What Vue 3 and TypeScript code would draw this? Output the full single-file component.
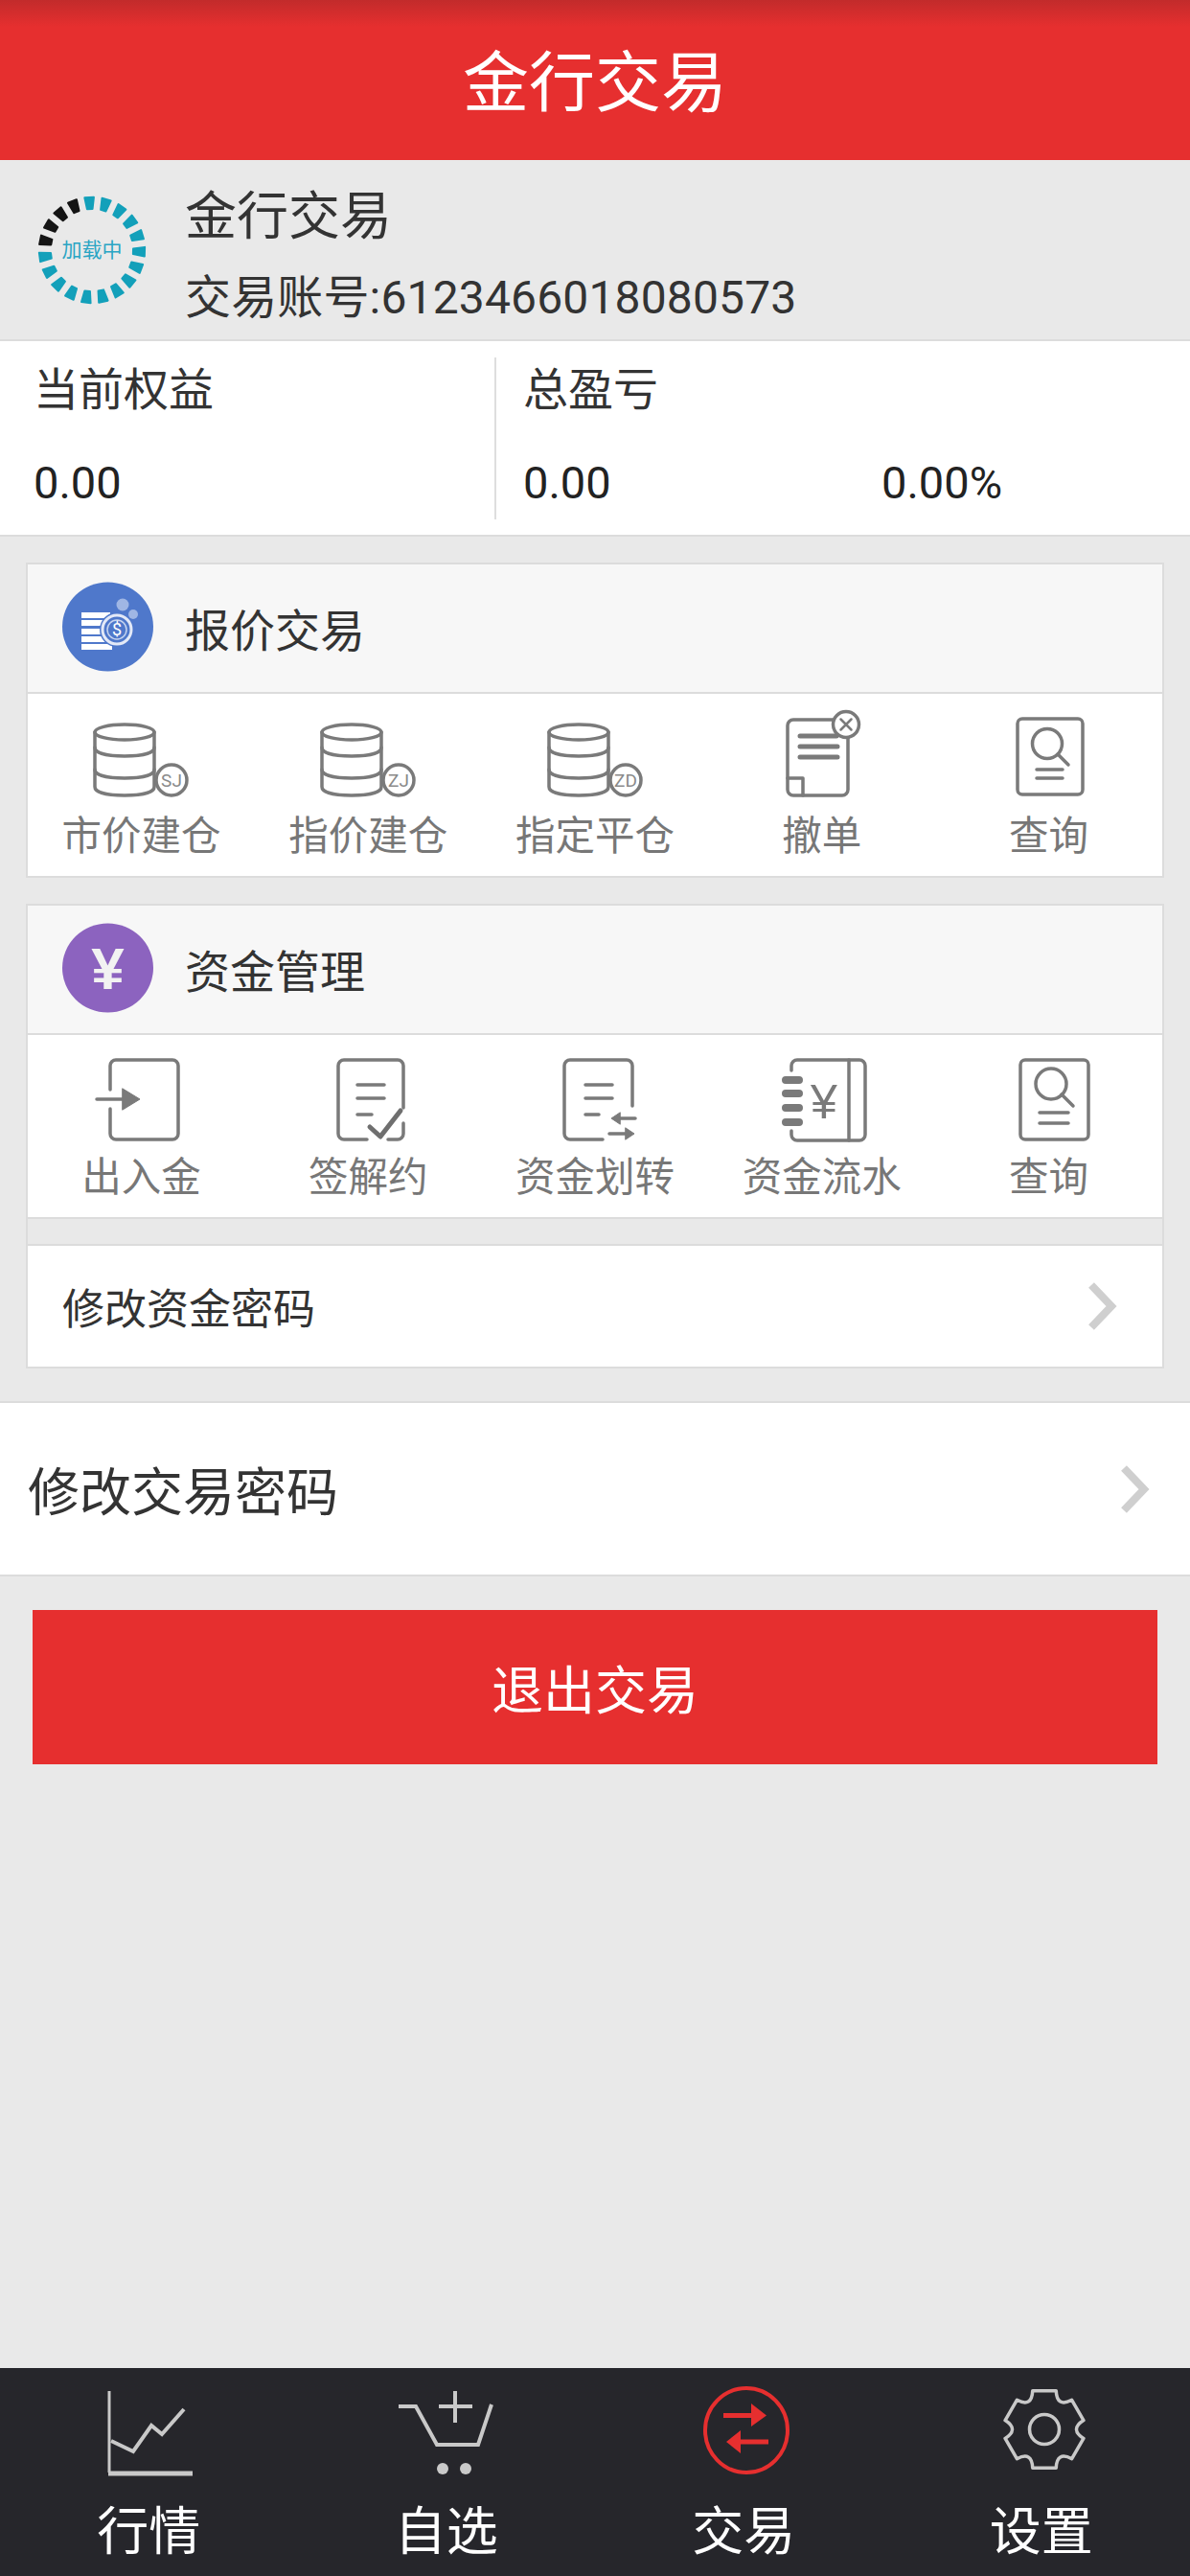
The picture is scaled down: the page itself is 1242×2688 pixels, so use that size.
<script setup lang="ts">
type Seg = { points: string; color: string }

const pt = (deg: number, r: number, cx = 60, cy = 60): [number, number] => {
  const a = (deg * Math.PI) / 180
  return [+(cx + Math.cos(a) * r).toFixed(2), +(cy + Math.sin(a) * r).toFixed(2)]
}

// loading ring: 19 tapered bars, last four are black
const ringSegs: Seg[] = Array.from({ length: 19 }, (_, i) => {
  const deg = -93 + (i * 360) / 19
  const a = (deg * Math.PI) / 180
  const nx = -Math.sin(a)
  const ny = Math.cos(a)
  const [ix, iy] = pt(deg, 43)
  const [ox, oy] = pt(deg, 55)
  const corners = [
    [ix - nx * 2.8, iy - ny * 2.8],
    [ox - nx * 4.8, oy - ny * 4.8],
    [ox + nx * 4.8, oy + ny * 4.8],
    [ix + nx * 2.8, iy + ny * 2.8]
  ]
  return {
    points: corners.map((c) => c.map((v) => v.toFixed(2)).join(',')).join(' '),
    color: i >= 15 ? '#151515' : '#13a0ba'
  }
})

// gear outline for the settings tab
const gearPath = (() => {
  let d = ''
  for (let i = 0; i < 6; i++) {
    const base = -90 + i * 60
    const a = pt(base - 17, 42, 58, 45)
    const b = pt(base + 17, 42, 58, 45)
    const c = pt(base + 30, 26, 58, 45)
    const e = pt(base + 43, 42, 58, 45)
    d += `${i === 0 ? 'M' : 'L'}${a[0]} ${a[1]} L${b[0]} ${b[1]} Q${c[0]} ${c[1]} ${e[0]} ${e[1]} `
  }
  return d + 'Z'
})()
</script>

<template>
  <div class="page">
    <header class="title-bar">金行交易</header>

    <main class="content">
      <section class="account">
        <svg class="loading" width="120" height="120" viewBox="0 0 120 120">
          <polygon
            v-for="(seg, i) in ringSegs"
            :key="i"
            :points="seg.points"
            :fill="seg.color"
            :stroke="seg.color"
            stroke-width="2"
            stroke-linejoin="round"
          />
          <text x="60" y="67" text-anchor="middle" class="loading-text">加载中</text>
        </svg>
        <div class="account-texts">
          <div class="account-name">金行交易</div>
          <div class="account-no">交易账号:6123466018080573</div>
        </div>
      </section>

      <section class="stats">
        <div class="stat stat-left">
          <div class="stat-label">当前权益</div>
          <div class="stat-values"><span>0.00</span></div>
        </div>
        <div class="stat stat-right">
          <div class="stat-label">总盈亏</div>
          <div class="stat-values">
            <span class="stat-first">0.00</span>
            <span>0.00%</span>
          </div>
        </div>
      </section>

      <section class="panel">
        <div class="panel-head">
          <svg width="96" height="94" viewBox="0 0 96 94">
            <ellipse cx="47.5" cy="47" rx="47.5" ry="46.5" fill="#4f78cb" />
            <g fill="#fff">
              <rect x="20" y="32" width="30" height="6" />
              <rect x="20" y="40" width="32" height="6" />
              <rect x="20" y="49" width="30" height="6" />
              <rect x="20" y="57" width="30" height="6" />
              <rect x="20" y="65" width="32" height="6" />
            </g>
            <circle cx="57" cy="50" r="18" fill="#4f78cb" />
            <circle cx="57" cy="50" r="15" fill="none" stroke="#e3e9f7" stroke-width="3" />
            <circle cx="57" cy="50" r="10" fill="none" stroke="#c6d4ef" stroke-width="1.5" />
            <text x="57" y="56" text-anchor="middle" class="coin-text">$</text>
            <circle cx="63" cy="24" r="6.5" fill="#9fb6e4" />
            <circle cx="74" cy="34" r="5" fill="#9fb6e4" />
          </svg>
          <span class="panel-title">报价交易</span>
        </div>
        <div class="panel-grid">
          <div class="cell">
            <svg class="ico" width="110" height="96" viewBox="0 0 110 96">
              <ellipse cx="38" cy="25" rx="31" ry="8" />
              <path d="M7 25V82C7 88 20 91 38 91S69 88 69 82V25" />
              <path d="M7 41C7 47 20 50 38 50S69 47 69 41" />
              <path d="M7 64C7 70 20 73 38 73S69 70 69 64" />
              <circle cx="87" cy="75" r="16" class="badge" />
              <text x="87" y="82" text-anchor="middle" class="badge-text">SJ</text>
            </svg>
            <span>市价建仓</span>
          </div>
          <div class="cell">
            <svg class="ico" width="110" height="96" viewBox="0 0 110 96">
              <ellipse cx="38" cy="25" rx="31" ry="8" />
              <path d="M7 25V82C7 88 20 91 38 91S69 88 69 82V25" />
              <path d="M7 41C7 47 20 50 38 50S69 47 69 41" />
              <path d="M7 64C7 70 20 73 38 73S69 70 69 64" />
              <circle cx="87" cy="75" r="16" class="badge" />
              <text x="87" y="82" text-anchor="middle" class="badge-text">ZJ</text>
            </svg>
            <span>指价建仓</span>
          </div>
          <div class="cell">
            <svg class="ico" width="110" height="96" viewBox="0 0 110 96">
              <ellipse cx="38" cy="25" rx="31" ry="8" />
              <path d="M7 25V82C7 88 20 91 38 91S69 88 69 82V25" />
              <path d="M7 41C7 47 20 50 38 50S69 47 69 41" />
              <path d="M7 64C7 70 20 73 38 73S69 70 69 64" />
              <circle cx="87" cy="75" r="16" class="badge" />
              <text x="87" y="82" text-anchor="middle" class="badge-text">ZD</text>
            </svg>
            <span>指定平仓</span>
          </div>
          <div class="cell">
            <svg class="ico" width="110" height="96" viewBox="0 0 110 96">
              <path d="M68 12H25A6 6 0 0 0 19 18V85A6 6 0 0 0 25 91H76A6 6 0 0 0 82 85V28" />
              <path d="M19 73H35V91" />
              <path d="M32 29H70M32 40H71M32 51H71" class="thick" />
              <circle cx="80" cy="17" r="13.5" class="badge" />
              <path d="M74.5 11.5L85.5 22.5M85.5 11.5L74.5 22.5" class="thin" />
            </svg>
            <span>撤单</span>
          </div>
          <div class="cell">
            <svg class="ico" width="110" height="96" viewBox="0 0 110 96">
              <rect x="22" y="11" width="68" height="79" rx="5" />
              <circle cx="53" cy="37" r="15.5" />
              <path d="M64 48L75 59" />
              <path d="M42 64H69M42 73H69" />
            </svg>
            <span>查询</span>
          </div>
        </div>
      </section>

      <section class="panel">
        <div class="panel-head">
          <svg width="96" height="94" viewBox="0 0 96 94">
            <ellipse cx="47.5" cy="47" rx="47.5" ry="46.5" fill="#8c63bf" />
            <text x="47.5" y="69" text-anchor="middle" class="yen-text">¥</text>
          </svg>
          <span class="panel-title">资金管理</span>
        </div>
        <div class="panel-grid">
          <div class="cell">
            <svg class="ico" width="110" height="96" viewBox="0 0 110 96">
              <path d="M23 42V17A6 6 0 0 1 29 11H88A6 6 0 0 1 94 17V88A6 6 0 0 1 88 94H29A6 6 0 0 1 23 88V62" />
              <path d="M9 52H40" />
              <path d="M36 41L54 52L36 63Z" class="solid" />
            </svg>
            <span>出入金</span>
          </div>
          <div class="cell">
            <svg class="ico" width="110" height="96" viewBox="0 0 110 96">
              <path d="M92 61V17A6 6 0 0 0 86 11H30A6 6 0 0 0 24 17V88A6 6 0 0 0 30 94H54M76 94H86A6 6 0 0 0 92 88V77" />
              <path d="M44 37H72M44 51H72M44 68H59" />
              <path d="M57 81L68 91L89 64" class="check" />
            </svg>
            <span>签解约</span>
          </div>
          <div class="cell">
            <svg class="ico" width="110" height="96" viewBox="0 0 110 96">
              <path d="M94 59V17A6 6 0 0 0 88 11H29A6 6 0 0 0 23 17V88A6 6 0 0 0 29 94H63" />
              <path d="M45 37H73M45 51H73M45 68H59" />
              <path d="M97 72H80M70 88H88" />
              <path d="M81 66L72 72L81 78ZM87 82L96 88L87 94Z" class="solid" />
            </svg>
            <span>资金划转</span>
          </div>
          <div class="cell">
            <svg class="ico" width="110" height="96" viewBox="0 0 110 96">
              <path d="M23 22V17A6 6 0 0 1 29 11H94A6 6 0 0 1 100 17V89A6 6 0 0 1 94 95H29A6 6 0 0 1 23 89V85" />
              <path d="M83 11V95" />
              <path d="M17 32H31M17 46H31M17 61H31M17 76H31" class="pill" />
              <text x="57" y="72" text-anchor="middle" class="book-text">¥</text>
            </svg>
            <span>资金流水</span>
          </div>
          <div class="cell">
            <svg class="ico" width="110" height="96" viewBox="0 0 110 96">
              <rect x="25" y="11" width="71" height="83" rx="5" />
              <circle cx="57" cy="36" r="16" />
              <path d="M68 47L80 59" />
              <path d="M45 66H75M45 77H75" />
            </svg>
            <span>查询</span>
          </div>
        </div>
        <div class="panel-gap"></div>
        <div class="panel-row">
          <span>修改资金密码</span>
          <svg width="34" height="52" viewBox="0 0 34 52" class="chev">
            <path d="M6 4L27 26L6 48" />
          </svg>
        </div>
      </section>

      <section class="big-row">
        <span>修改交易密码</span>
        <svg width="36" height="52" viewBox="0 0 34 52" class="chev">
          <path d="M6 4L27 26L6 48" />
        </svg>
      </section>

      <div class="logout">退出交易</div>
    </main>

    <nav class="tabs">
      <div class="tab">
        <svg width="110" height="100" viewBox="0 0 110 100" class="tab-ico">
          <path d="M14 5V90" stroke-width="3" />
          <path d="M13 91H101" stroke-width="5" />
          <path d="M16 57L39 68L58 41L69 50L92 24" />
        </svg>
        <span>行情</span>
      </div>
      <div class="tab">
        <svg width="110" height="100" viewBox="0 0 110 100" class="tab-ico">
          <path d="M5 21H23L45 61H88L102 19" />
          <path d="M64 5V38M47 21H82" />
          <circle cx="51" cy="86" r="6" class="tab-dot" />
          <circle cx="75" cy="86" r="6" class="tab-dot" />
        </svg>
        <span>自选</span>
      </div>
      <div class="tab">
        <svg width="110" height="100" viewBox="0 0 110 100" class="tab-ico tab-active">
          <ellipse cx="58" cy="46" rx="43" ry="44" stroke-width="4" />
          <path d="M34 30.500H66M81 58H50" stroke-width="5" />
          <path d="M63 18L79 30.500L63 42ZM52 46L37 58L52 70Z" class="tab-solid" />
        </svg>
        <span>交易</span>
      </div>
      <div class="tab">
        <svg width="110" height="100" viewBox="0 0 110 100" class="tab-ico">
          <path :d="gearPath" stroke-linejoin="round" stroke-width="3.5" />
          <circle cx="58" cy="45" r="15.500" stroke-width="3.5" />
        </svg>
        <span>设置</span>
      </div>
    </nav>
  </div>
</template>

<style scoped>
.page {
  width: 1242px;
  height: 2688px;
  display: flex;
  flex-direction: column;
  background: #e9e9e9;
  font-family: Roboto, "Noto Sans CJK SC", sans-serif;
  color: #333;
  overflow: hidden;
}
.title-bar {
  height: 167px;
  display: flex;
  align-items: center;
  justify-content: center;
  padding-bottom: 5px;
  box-sizing: border-box;
  background: linear-gradient(#c22b2b 0, #e62f2f 28px);
  color: #fff;
  font-size: 69px;
}
.content {
  flex: 1;
}
.account {
  height: 189px;
  box-sizing: border-box;
  border-bottom: 2px solid #dcdcdc;
  display: flex;
  align-items: center;
  padding-left: 36px;
  gap: 37px;
}
.loading-text {
  fill: #2aa5c4;
  font-size: 21px;
}
.account-texts {
  align-self: flex-start;
  padding-top: 30px;
}
.account-name {
  line-height: 60px;
  font-size: 54px;
}
.account-no {
  margin-top: 24px;
  line-height: 60px;
  font-size: 48px;
  letter-spacing: 0.15px;
}
.stats {
  height: 204px;
  box-sizing: border-box;
  padding: 17px 0 16px;
  background: #fff;
  border-bottom: 2px solid #dcdcdc;
  display: flex;
}
.stat {
  box-sizing: border-box;
  padding-top: 4px;
}
.stat-left {
  width: 518px;
  padding-left: 35px;
  border-right: 2px solid #dedede;
}
.stat-right {
  flex: 1;
  padding-left: 28px;
}
.stat-label {
  line-height: 60px;
  font-size: 47px;
}
.stat-values {
  margin-top: 37px;
  line-height: 60px;
  font-size: 47px;
  color: #222;
  display: flex;
}
.stat-first {
  width: 374px;
}
.panel {
  margin: 27px 27px 0;
  border: 2px solid #dcdcdc;
  background: #e9e9e9;
}
.panel-head {
  height: 133px;
  box-sizing: content-box;
  display: flex;
  align-items: center;
  padding-left: 36px;
  gap: 32px;
  background: #f7f7f7;
  border-bottom: 2px solid #dcdcdc;
}
.panel-head > * {
  margin-bottom: 3px;
}
.panel-title {
  font-size: 47px;
}
.coin-text {
  fill: #fff;
  font-size: 18px;
}
.yen-text {
  fill: #f2f2f2;
  font-size: 62px;
  font-weight: 700;
  font-family: "Liberation Sans", sans-serif;
}
.panel-grid {
  height: 190px;
  display: grid;
  grid-template-columns: repeat(5, 1fr);
  background: #fff;
}
.cell {
  display: flex;
  flex-direction: column;
  align-items: center;
  padding-top: 15px;
  color: #777;
  font-size: 41.5px;
  line-height: 50px;
}
.cell span {
  margin-top: 13px;
  white-space: nowrap;
}
.ico {
  overflow: visible;
  fill: none;
  stroke: #7a7a7a;
  stroke-width: 3.5;
  stroke-linecap: round;
  stroke-linejoin: round;
}
.ico .badge {
  fill: #fff;
}
.ico .badge-text {
  fill: #8a8a8a;
  stroke: none;
  font-size: 19px;
}
.ico .book-text {
  fill: #7a7a7a;
  stroke: none;
  font-size: 50px;
  font-family: "Liberation Sans", sans-serif;
}
.ico .thick {
  stroke-width: 5;
}
.ico .thin {
  stroke-width: 2.5;
}
.ico .pill {
  stroke-width: 8;
}
.ico .check {
  stroke-width: 5;
  stroke: #6f6f6f;
}
.ico .solid {
  fill: #7a7a7a;
  stroke-width: 1;
}
.panel-gap {
  height: 26px;
  border-top: 2px solid #dcdcdc;
  border-bottom: 2px solid #dcdcdc;
}
.panel-row {
  height: 126px;
  background: #fff;
  display: flex;
  align-items: center;
  justify-content: space-between;
  padding: 0 46px 0 36px;
  font-size: 44px;
}
.chev {
  fill: none;
  stroke: #cfcfcf;
  stroke-width: 8;
}
.big-row {
  margin-top: 34px;
  height: 183px;
  box-sizing: border-box;
  background: #fff;
  border-top: 2px solid #dcdcdc;
  border-bottom: 2px solid #dcdcdc;
  display: flex;
  align-items: center;
  justify-content: space-between;
  padding: 0 40px 0 29px;
  font-size: 54px;
}
.logout {
  margin: 35px 34px 0;
  height: 161px;
  background: #e62f2f;
  color: #fff;
  font-size: 54px;
  display: flex;
  align-items: center;
  justify-content: center;
}
.tabs {
  height: 217px;
  background: #26262b;
  display: grid;
  grid-template-columns: repeat(4, 1fr);
}
.tab {
  display: flex;
  flex-direction: column;
  align-items: center;
  padding-top: 19px;
  color: #fff;
  font-size: 54px;
  line-height: 60px;
}
.tab span {
  margin-top: 23px;
}
.tab-ico {
  fill: none;
  stroke: #c9c9c9;
  stroke-width: 4;
}
.tab-ico .tab-dot {
  fill: #c9c9c9;
  stroke: none;
}
.tab-active {
  stroke: #e62f2f;
}
.tab-active .tab-solid {
  fill: #e62f2f;
  stroke: none;
}
</style>

<style>
html,
body {
  margin: 0;
  background: #e9e9e9;
}
</style>
